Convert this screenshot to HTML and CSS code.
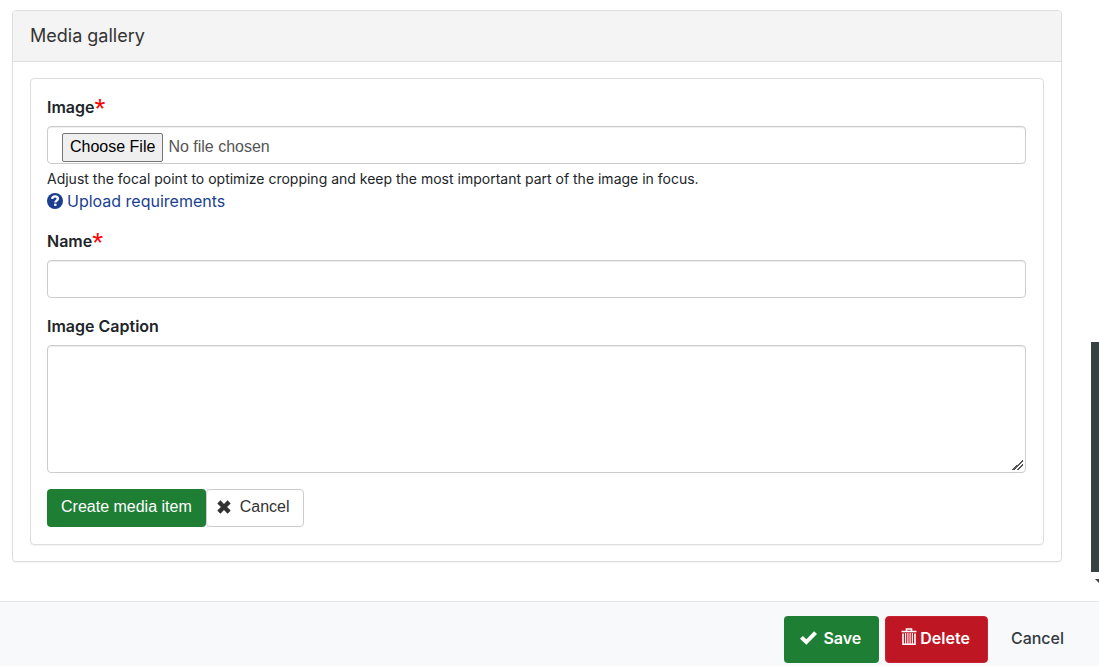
FILE: index.html
```html
<!DOCTYPE html>
<html lang="en">

<head>
    <meta charset="UTF-8">
    <meta name="viewport" content="width=device-width, initial-scale=1.0">
    <title>Media gallery</title>
    <link rel="stylesheet" href="styles.css">
</head>

<body>

    <div class="page">
        <main class="content">
            <section class="panel">
                <h1 class="panel-heading">Media gallery</h1>
                <div class="panel-body">
                    <form class="media-form" id="media-form">
                        <div class="form-group">
                            <label for="image">Image<span class="required">*</span></label>
                            <input class="form-control file" type="file" id="image">
                            <p class="help-text">Adjust the focal point to optimize cropping and keep the most important part of the image in focus.</p>
                            <a class="help-link" href="#">
                                <svg width="16" height="16" viewBox="0 0 15 15" aria-hidden="true">
                                    <circle cx="7.5" cy="7.5" r="7.5" fill="#1b3f8f" />
                                    <path d="M4.8 5.6C5 4 6.1 3.2 7.6 3.2C9.1 3.2 10.2 4.2 10.2 5.5C10.2 7.2 7.8 7.1 7.8 9" fill="none" stroke="#fff" stroke-width="2.2" />
                                    <rect x="6.7" y="10" width="2.2" height="2.1" fill="#fff" />
                                </svg>
                                <span>Upload requirements</span>
                            </a>
                        </div>
                        <div class="form-group">
                            <label for="name">Name<span class="required">*</span></label>
                            <input class="form-control" type="text" id="name">
                        </div>
                        <div class="form-group">
                            <label for="caption">Image Caption</label>
                            <textarea class="form-control caption" id="caption"></textarea>
                        </div>
                        <div class="form-buttons">
                            <button class="btn btn-create" type="submit">Create media item</button>
                            <button class="btn btn-default" type="button">
                                <svg width="14" height="14" viewBox="0 0 14 14" aria-hidden="true">
                                    <path d="M3.4 0.3L7 3.9L10.6 0.3L13.7 3.4L10.1 7L13.7 10.6L10.6 13.7L7 10.1L3.4 13.7L0.3 10.6L3.9 7L0.3 3.4Z" fill="#333" />
                                </svg>
                                Cancel
                            </button>
                        </div>
                    </form>
                </div>
            </section>
        </main>
        <div class="scroll-strip" aria-hidden="true">
            <div class="scroll-thumb"></div>
            <svg width="8" height="12" viewBox="0 0 8 12">
                <path d="M4 7H8V11Z" fill="#374242" />
            </svg>
        </div>
    </div>

    <footer class="action-bar">
        <button class="btn btn-save" type="button">
            <svg width="17" height="14" viewBox="0 0 17 14" aria-hidden="true">
                <path d="M0 7.8L2.9 4.9L6.4 8.2L14.1 0.3L17 3.1L6.4 13.8Z" fill="#fff" />
            </svg>
            Save
        </button>
        <button class="btn btn-delete" type="button">
            <svg width="16" height="21" viewBox="0 0 16 21" aria-hidden="true">
                <path d="M0.5 3.5H15.5M5.5 3V1H10.5V3" fill="none" stroke="#fff" stroke-width="1.6" />
                <path d="M2 5.5V16.2H14V5.5" fill="none" stroke="#fff" stroke-width="1.6" />
                <path d="M4.6 5V16M6.9 5V16M9.1 5V16M11.4 5V16" stroke="#fff" stroke-width="1.1" />
            </svg>
            Delete
        </button>
        <button class="btn btn-link" type="button">Cancel</button>
    </footer>

</body>

</html>
```

FILE: styles.css
```css
* {
    box-sizing: border-box;
}

body {
    margin: 0;
    min-height: 100vh;
    display: flex;
    flex-direction: column;
    font-family: Inter, sans-serif;
    font-size: 16px;
    line-height: 24px;
    color: #212529;
    background-color: #fff;
}

.page {
    flex: 1;
    display: flex;
}

.content {
    flex: 1;
    padding: 10px 29px 39px 12px;
}

.panel {
    border: 1px solid #ddd;
    border-radius: 4px;
    box-shadow: 0 1px 1px rgba(0, 0, 0, 0.05);
}

.panel-heading {
    margin: 0;
    padding: 13px 17px;
    font-size: 18px;
    font-weight: 400;
    color: #333;
    background-color: #f4f4f4;
    border-bottom: 1px solid #ddd;
    border-radius: 3px 3px 0 0;
}

.panel-body {
    padding: 16px 17px;
}

.media-form {
    padding: 16px 17px 17px 16px;
    border: 1px solid #ddd;
    border-radius: 4px;
    box-shadow: 0 1px 1px rgba(0, 0, 0, 0.05);
}

.form-group {
    margin-bottom: 16px;
}

label {
    display: block;
    margin-bottom: 7px;
    font-weight: 600;
}

.required {
    font-family: "Liberation Sans", Arial, sans-serif;
    font-size: 28px;
    font-weight: 400;
    line-height: 0;
    vertical-align: -5px;
    color: #f00;
}

.form-control {
    display: block;
    width: 100%;
    height: 38px;
    padding: 6px 14px;
    font-family: "Liberation Sans", Arial, sans-serif;
    font-size: 16px;
    color: #555;
    background-color: #fff;
    border: 1px solid #ccc;
    border-radius: 4px;
    box-shadow: inset 0 1px 1px rgba(0, 0, 0, 0.075);
}

.file::file-selector-button {
    height: 29px;
    margin: 0 5px 0 0;
    padding: 0 7px 2px;
    font-family: inherit;
    font-size: 16px;
    color: #000;
    background-color: #efefef;
    border: 1px solid #767676;
    border-radius: 2px;
}

.caption {
    height: 128px;
    resize: both;
}

.caption::-webkit-resizer {
    background: linear-gradient(135deg, transparent 50%, #555 50%, #555 60%, transparent 60%, transparent 70%, #555 70%, #555 80%, transparent 80%) no-repeat 2px 2px / 11px 11px;
}

.help-text {
    margin: 5px 0 0;
    font-size: 14px;
    line-height: 20px;
}

.help-link {
    display: flex;
    align-items: center;
    gap: 4px;
    color: #1b3f8f;
    text-decoration: none;
}

.form-buttons {
    display: flex;
}

.btn {
    display: flex;
    align-items: center;
    justify-content: center;
    height: 38px;
    padding: 0 13px 2px;
    font-family: "Liberation Sans", Arial, sans-serif;
    font-size: 16px;
    border: 1px solid transparent;
    border-radius: 4px;
    cursor: pointer;
}

.btn-create {
    color: #fff;
    background-color: #1e7e34;
}

.btn-default {
    gap: 9px;
    padding: 0 13px 2px 10px;
    color: #333;
    background-color: #fff;
    border-color: #ccc;
}

/* strip at the right edge */
.scroll-strip {
    width: 8px;
    padding-top: 342px;
}

.scroll-thumb {
    height: 230px;
    background-color: #374242;
}

.scroll-strip svg {
    display: block;
}

.action-bar {
    display: flex;
    gap: 6px;
    padding: 14px 19px 3px;
    background-color: #f8f9fa;
    border-top: 1px solid #e3e6e9;
    justify-content: flex-end;
}

.action-bar .btn {
    height: 47px;
    padding: 0 15px 3px;
    font-family: Inter, sans-serif;
    font-weight: 600;
    color: #fff;
}

.action-bar .btn-save {
    gap: 6px;
    padding-right: 17px;
    background-color: #1e7e34;
}

.action-bar .btn-delete {
    gap: 3px;
    padding-right: 17px;
    background-color: #be1622;
    border-color: #c82333;
}

.action-bar .btn-link {
    padding-left: 16px;
    font-weight: 500;
    color: #343a40;
    background-color: transparent;
}
```
